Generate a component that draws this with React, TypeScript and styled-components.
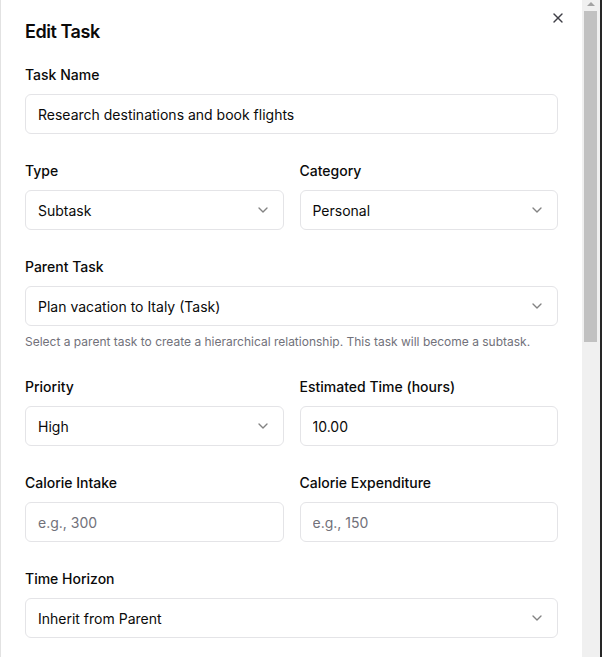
import React from "react";
import styled, { createGlobalStyle } from "styled-components";
import { ChevronDown, X } from "lucide-react";

const Global = createGlobalStyle`
  html, body { margin: 0; padding: 0; background: #262626; }
  body { font-family: Inter, "Noto Sans", Arial, sans-serif; color: #0a0a0a; }
  * { box-sizing: border-box; }
`;

const Page = styled.div`
  display: flex;
  height: 657px;
  width: 602px;
  background: #262626;
  overflow: hidden;
`;

const Dialog = styled.div`
  display: flex;
  width: 600px;
  height: 657px;
  background: #ffffff;
`;

const Panel = styled.div`
  position: relative;
  flex: 1;
  min-width: 0;
  height: 657px;
  border-left: 1px solid #e2e2e2;
  overflow: hidden;
`;

const ScrollTrack = styled.div`
  width: 18px;
  height: 657px;
  background: #f0f0f0;
  display: flex;
  flex-direction: column;
  align-items: stretch;
`;

const ScrollArrow = styled.div`
  height: 11px;
  display: flex;
  align-items: flex-start;
  justify-content: center;
  padding-top: 2px;
  &::before {
    content: "";
    width: 0;
    height: 0;
    border-left: 4px solid transparent;
    border-right: 4px solid transparent;
    border-bottom: 4px solid #a3a3a3;
  }
`;

const ScrollThumb = styled.div`
  height: 331px;
  margin: 0 3px 0 2px;
  background: #c1c1c1;
`;

const Content = styled.div`
  padding: 18px 24px 24px 24px;
  display: flex;
  flex-direction: column;
`;

const Title = styled.h2`
  margin: 0 0 19px 0;
  font-size: 18px;
  line-height: 28px;
  font-weight: 600;
  letter-spacing: -0.45px;
  color: #0a0a0a;
`;

const CloseButton = styled.button`
  position: absolute;
  top: 10px;
  right: 16px;
  width: 16px;
  height: 16px;
  padding: 0;
  border: none;
  background: transparent;
  color: #3f3f46;
  display: flex;
  align-items: center;
  justify-content: center;
  cursor: pointer;
`;

const Form = styled.div`
  display: flex;
  flex-direction: column;
  gap: 27px;
`;

const Row = styled.div`
  display: grid;
  grid-template-columns: 1fr 1fr;
  gap: 16px;
`;

const Field = styled.div`
  display: flex;
  flex-direction: column;
`;

const Label = styled.label`
  font-size: 14px;
  line-height: 20px;
  font-weight: 500;
  color: #0a0a0a;
  margin-bottom: 9px;
`;

const Input = styled.input`
  height: 40px;
  width: 100%;
  padding: 0 12px;
  border: 1px solid #e4e4e7;
  border-radius: 6px;
  background: #ffffff;
  font-family: inherit;
  font-size: 14px;
  color: #0a0a0a;
  outline: none;
  &::placeholder { color: #71717a; }
`;

const SelectBox = styled.div`
  height: 40px;
  display: flex;
  align-items: center;
  justify-content: space-between;
  padding: 0 12px;
  border: 1px solid #e4e4e7;
  border-radius: 6px;
  background: #ffffff;
  font-size: 14px;
  color: #0a0a0a;
  svg { color: #0a0a0a; opacity: 0.5; flex-shrink: 0; }
`;

const Help = styled.p`
  margin: 8px 0 0 0;
  font-size: 12px;
  line-height: 16px;
  color: #71717a;
`;

const Select = ({ value }: { value: string }) => (
  <SelectBox>
    <span>{value}</span>
    <ChevronDown size={16} strokeWidth={2} />
  </SelectBox>
);

export default function App() {
  return (
    <>
      <Global />
      <Page>
        <Dialog>
          <Panel>
            <CloseButton aria-label="Close">
              <X size={16} strokeWidth={2} />
            </CloseButton>
            <Content>
              <Title>Edit Task</Title>
              <Form>
                <Field>
                  <Label>Task Name</Label>
                  <Input defaultValue="Research destinations and book flights" />
                </Field>
                <Row>
                  <Field>
                    <Label>Type</Label>
                    <Select value="Subtask" />
                  </Field>
                  <Field>
                    <Label>Category</Label>
                    <Select value="Personal" />
                  </Field>
                </Row>
                <Field>
                  <Label>Parent Task</Label>
                  <Select value="Plan vacation to Italy (Task)" />
                  <Help>
                    Select a parent task to create a hierarchical relationship. This task will become a subtask.
                  </Help>
                </Field>
                <Row>
                  <Field>
                    <Label>Priority</Label>
                    <Select value="High" />
                  </Field>
                  <Field>
                    <Label>Estimated Time (hours)</Label>
                    <Input defaultValue="10.00" />
                  </Field>
                </Row>
                <Row>
                  <Field>
                    <Label>Calorie Intake</Label>
                    <Input placeholder="e.g., 300" />
                  </Field>
                  <Field>
                    <Label>Calorie Expenditure</Label>
                    <Input placeholder="e.g., 150" />
                  </Field>
                </Row>
                <Field>
                  <Label>Time Horizon</Label>
                  <Select value="Inherit from Parent" />
                </Field>
              </Form>
            </Content>
          </Panel>
          <ScrollTrack>
            <ScrollArrow />
            <ScrollThumb />
          </ScrollTrack>
        </Dialog>
      </Page>
    </>
  );
}
